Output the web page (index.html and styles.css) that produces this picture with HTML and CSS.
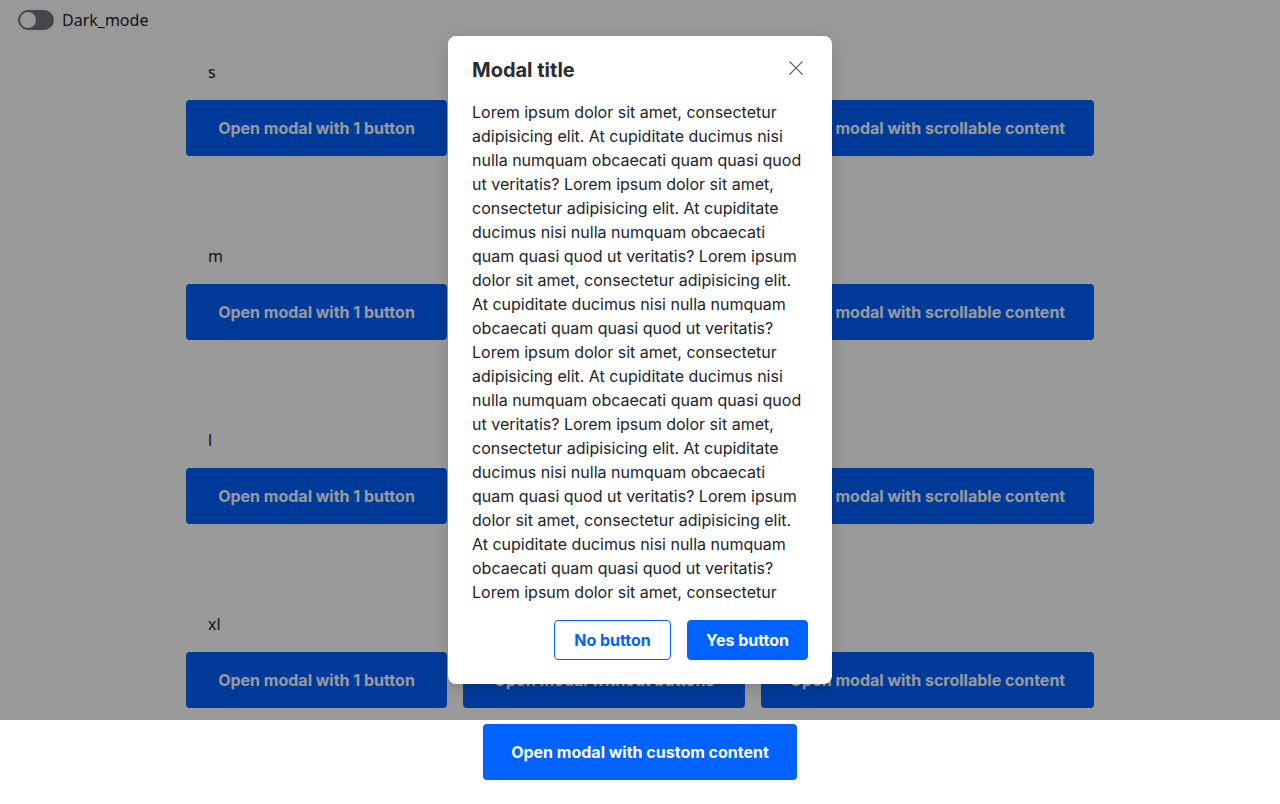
FILE: index.html
```html
<!DOCTYPE html>
<html lang="en">
<head>
<meta charset="utf-8">
<title>Modal demo</title>
<link rel="stylesheet" href="styles.css">
</head>
<body>
<div class="page">
  <header class="topbar">
    <label class="toggle">
      <span class="toggle-track"><span class="toggle-knob"></span></span>
      <span class="toggle-label">Dark_mode</span>
    </label>
  </header>

  <main class="sections">
    <section class="size">
      <div class="size-label">s</div>
      <div class="row">
        <button class="btn btn-1">Open modal with 1 button</button>
        <button class="btn btn-2">Open modal without buttons</button>
        <button class="btn btn-3">Open modal with scrollable content</button>
      </div>
    </section>
    <section class="size">
      <div class="size-label">m</div>
      <div class="row">
        <button class="btn btn-1">Open modal with 1 button</button>
        <button class="btn btn-2">Open modal without buttons</button>
        <button class="btn btn-3">Open modal with scrollable content</button>
      </div>
    </section>
    <section class="size">
      <div class="size-label">l</div>
      <div class="row">
        <button class="btn btn-1">Open modal with 1 button</button>
        <button class="btn btn-2">Open modal without buttons</button>
        <button class="btn btn-3">Open modal with scrollable content</button>
      </div>
    </section>
    <section class="size">
      <div class="size-label">xl</div>
      <div class="row">
        <button class="btn btn-1">Open modal with 1 button</button>
        <button class="btn btn-2">Open modal without buttons</button>
        <button class="btn btn-3">Open modal with scrollable content</button>
      </div>
    </section>
    <div class="custom-row">
      <button class="btn btn-custom">Open modal with custom content</button>
    </div>
  </main>

  <div class="overlay">
    <div class="modal" role="dialog">
      <div class="modal-header">
        <h2 class="modal-title">Modal title</h2>
        <button class="modal-close" aria-label="Close">
          <svg width="14" height="14" viewBox="0 0 14 14"><path d="M0.5 0.5L13.5 13.5M13.5 0.5L0.5 13.5" stroke="#6b6e75" stroke-width="1.3" fill="none"/></svg>
        </button>
      </div>
      <div class="modal-body">
        <p>Lorem ipsum dolor sit amet, consectetur adipisicing elit. At cupiditate ducimus nisi nulla numquam obcaecati quam quasi quod ut veritatis? Lorem ipsum dolor sit amet, consectetur adipisicing elit. At cupiditate ducimus nisi nulla numquam obcaecati quam quasi quod ut veritatis? Lorem ipsum dolor sit amet, consectetur adipisicing elit. At cupiditate ducimus nisi nulla numquam obcaecati quam quasi quod ut veritatis? Lorem ipsum dolor sit amet, consectetur adipisicing elit. At cupiditate ducimus nisi nulla numquam obcaecati quam quasi quod ut veritatis? Lorem ipsum dolor sit amet, consectetur adipisicing elit. At cupiditate ducimus nisi nulla numquam obcaecati quam quasi quod ut veritatis? Lorem ipsum dolor sit amet, consectetur adipisicing elit. At cupiditate ducimus nisi nulla numquam obcaecati quam quasi quod ut veritatis? Lorem ipsum dolor sit amet, consectetur adipisicing elit. At cupiditate ducimus nisi nulla numquam obcaecati quam quasi quod ut veritatis? Lorem ipsum dolor sit amet, consectetur adipisicing elit. At cupiditate ducimus nisi nulla numquam obcaecati quam quasi quod ut veritatis?</p>
      </div>
      <div class="modal-footer">
        <button class="mbtn mbtn-secondary">No button</button>
        <button class="mbtn mbtn-primary">Yes button</button>
      </div>
    </div>
  </div>
</div>
</body>
</html>
```
FILE: styles.css
```css
* { box-sizing: border-box; }
html, body { margin: 0; padding: 0; }
body {
  font-family: "Inter", "Noto Sans", sans-serif;
  color: #222428;
  background: #ffffff;
}
.page { position: relative; min-height: 804px; }

.topbar { height: 40px; padding: 10px 18px; display: flex; align-items: flex-start; }
.toggle { display: flex; align-items: center; gap: 8px; cursor: pointer; }
.toggle-track {
  width: 36px; height: 20px; border-radius: 10px;
  background: #72757e; display: flex; align-items: center; padding: 2px;
}
.toggle-knob { width: 16px; height: 16px; border-radius: 50%; background: #ffffff; }
.toggle-label { font-family: "Noto Sans", sans-serif; font-size: 16px; line-height: 20px; color: #222; }

.sections { width: 908px; margin: 0 auto; padding-top: 20px; }
.size { margin-bottom: 88px; }
.size:nth-of-type(4) { margin-bottom: 16px; }
.size-label { padding-left: 22px; font-family: "Noto Sans", sans-serif; font-size: 16px; line-height: 24px; margin-bottom: 16px; color: #222; }
.row { display: flex; gap: 16px; }

.btn {
  height: 56px; padding: 0 24px; border: 0; border-radius: 4px;
  background: #0062ff; color: #ffffff;
  font-family: "Inter", sans-serif; font-weight: 700; font-size: 16px;
  cursor: pointer; white-space: nowrap;
}
.btn-1 { width: 261px; }
.btn-2 { width: 282px; }
.btn-3 { width: 333px; }
.btn-custom { width: 314px; }
.custom-row { display: flex; justify-content: center; }

.overlay {
  position: absolute; left: 0; top: 0; width: 100%; height: 720px;
  background: rgba(0, 0, 0, 0.4);
  display: flex; align-items: center; justify-content: center;
}
.modal {
  width: 384px; height: 648px; background: #fff; border-radius: 8px;
  padding: 24px; display: flex; flex-direction: column;
  box-shadow: 0 4px 16px rgba(0,0,0,0.15);
}
.modal-header { display: flex; justify-content: space-between; align-items: flex-start; margin-bottom: 20px; }
.modal-title { margin: 0; font-size: 20px; line-height: 20px; font-weight: 700; color: #2a2c31; }
.modal-close { border: 0; background: none; padding: 0; margin-top: 1px; margin-right: 5px; width: 14px; height: 14px; cursor: pointer; display: block; }
.modal-close svg { display: block; }
.modal-body {
  flex: 1 1 auto; min-height: 0; overflow-y: auto; scrollbar-width: none;
  font-size: 16px; line-height: 24px; color: #222428;
}
.modal-body p { margin: 0; }
.modal-footer { display: flex; justify-content: flex-end; gap: 16px; margin-top: 16px; }
.mbtn {
  height: 40px; padding: 0 8px; border-radius: 4px; white-space: nowrap;
  font-family: "Inter", sans-serif; font-weight: 700; font-size: 16px; cursor: pointer;
}
.mbtn-secondary { width: 117px; background: #fff; color: #0062ff; border: 1px solid #0062ff; }
.mbtn-primary { width: 121px; background: #0062ff; color: #fff; border: 1px solid #0062ff; }
```
